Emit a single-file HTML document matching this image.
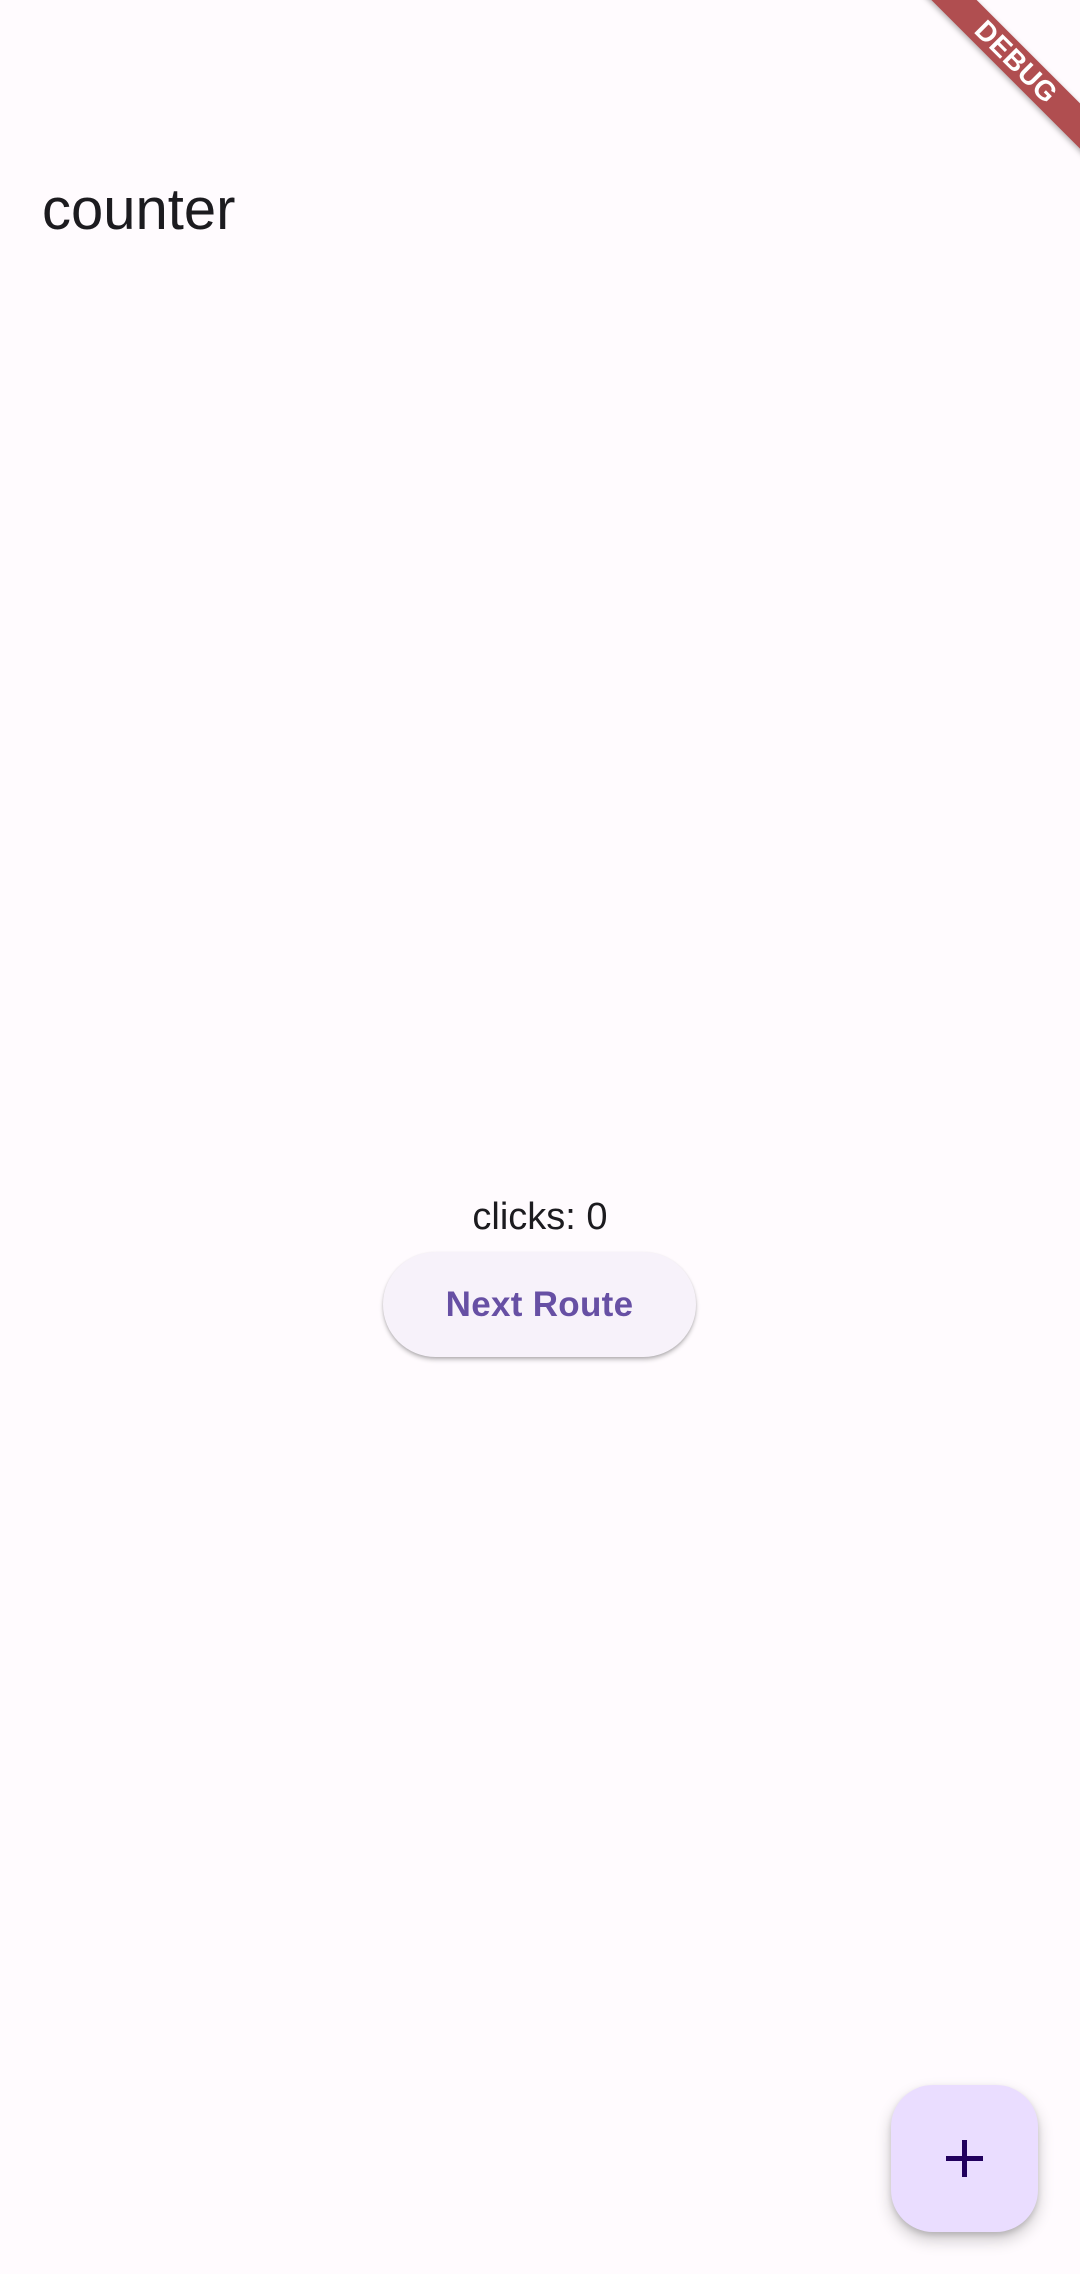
<!DOCTYPE html>
<html><head><meta charset="utf-8"><style>
html,body{margin:0;padding:0;}
body{width:1080px;height:2274px;background:#fffbfe;position:relative;overflow:hidden;font-family:"Liberation Sans",sans-serif;}
.title{position:absolute;left:42px;top:174px;font-size:58px;line-height:72px;color:#1c1b1f;}
.clicks{position:absolute;left:0;width:1080px;text-align:center;top:1193px;font-size:38px;line-height:48px;color:#1c1b1f;}
.btn{position:absolute;left:383px;top:1252px;width:313px;height:105px;border-radius:53px;background:#f7f2fa;box-shadow:0 3px 4px rgba(0,0,0,0.22),0 1px 2px rgba(0,0,0,0.12);color:#6750a4;font-weight:bold;font-size:35px;line-height:105px;text-align:center;letter-spacing:0.3px;}
.fab{position:absolute;left:891px;top:2085px;width:147px;height:147px;border-radius:42px;background:#eaddff;box-shadow:0 8px 16px rgba(0,0,0,0.2),0 3px 6px rgba(0,0,0,0.14);}
.fab .h{position:absolute;left:55px;top:71px;width:37px;height:5px;background:#21005d;}
.fab .v{position:absolute;left:71px;top:55px;width:5px;height:37px;background:#21005d;}
.banner{position:absolute;left:816px;top:46px;width:400px;height:32px;background:#b04e50;transform:rotate(45deg);color:#fff;font-weight:bold;font-size:28px;line-height:32px;text-align:center;box-shadow:0 2px 6px rgba(0,0,0,0.3);letter-spacing:0.5px;}
</style></head><body>
<div class="title">counter</div>
<div class="clicks">clicks: 0</div>
<div class="btn">Next Route</div>
<div class="fab"><div class="h"></div><div class="v"></div></div>
<div class="banner">DEBUG</div>
</body></html>
